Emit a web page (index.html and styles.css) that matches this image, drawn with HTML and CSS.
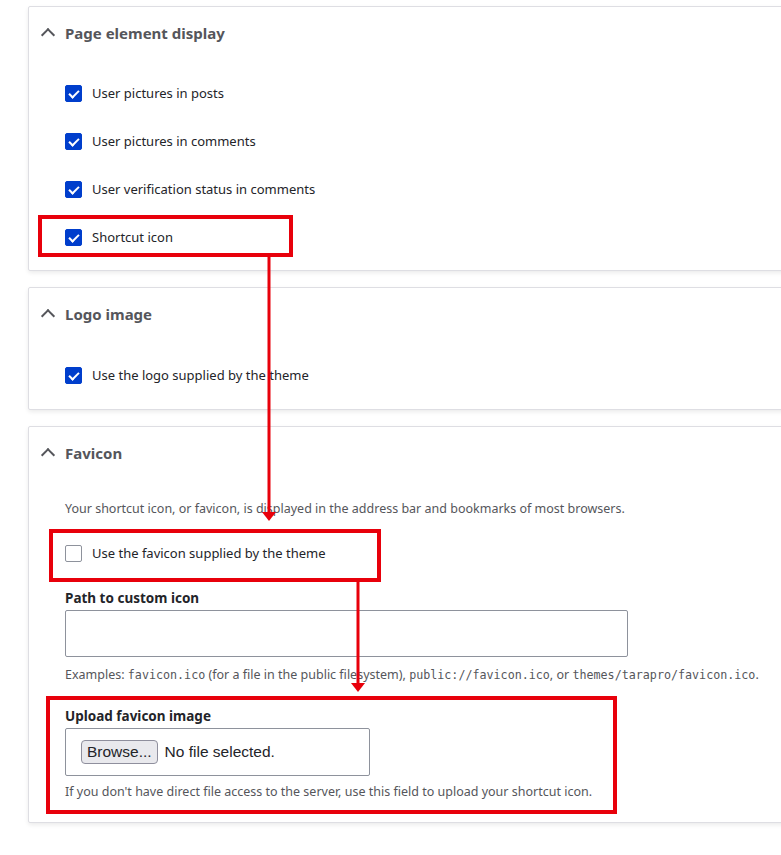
FILE: index.html
```html
<!DOCTYPE html>
<html lang="en">
<head>
  <meta charset="UTF-8" />
  <title>Appearance settings</title>
  <link rel="stylesheet" href="styles.css">
</head>
<body>
  <div class="page">

    <details class="card" open>
      <summary class="card-title"><span class="chevron"></span>Page element display</summary>
      <div class="card-body">
        <label class="check-row"><span class="box checked"></span>User pictures in posts</label>
        <label class="check-row"><span class="box checked"></span>User pictures in comments</label>
        <label class="check-row"><span class="box checked"></span>User verification status in comments</label>
        <label class="check-row"><span class="box checked"></span>Shortcut icon</label>
      </div>
    </details>

    <details class="card" open>
      <summary class="card-title"><span class="chevron"></span>Logo image</summary>
      <div class="card-body logo-body">
        <label class="check-row"><span class="box checked"></span>Use the logo supplied by the theme</label>
      </div>
    </details>

    <details class="card" open>
      <summary class="card-title"><span class="chevron"></span>Favicon</summary>
      <div class="card-body favicon-body">
        <p class="description">Your shortcut icon, or favicon, is displayed in the address bar and bookmarks of most browsers.</p>
        <label class="check-row"><span class="box"></span>Use the favicon supplied by the theme</label>

        <label class="field-label" for="favicon_path">Path to custom icon</label>
        <input type="text" id="favicon_path" class="text-input" />
        <p class="description examples">Examples: <code>favicon.ico</code> (for a file in the public filesystem), <code>public://favicon.ico</code>, or <code>themes/tarapro/favicon.ico</code>.</p>

        <label class="field-label upload-label">Upload favicon image</label>
        <div class="file-input">
          <span class="browse-btn">Browse...</span>
          <span class="file-status">No file selected.</span>
        </div>
        <p class="description help">If you don't have direct file access to the server, use this field to upload your shortcut icon.</p>
      </div>
    </details>

  </div>

  <!-- annotations drawn on top of the screenshot -->
  <div class="mark mark-shortcut"></div>
  <div class="mark mark-theme"></div>
  <div class="mark mark-upload"></div>
  <svg class="arrows" width="781" height="855" viewBox="0 0 781 855">
    <line x1="269" y1="256" x2="269" y2="513" stroke="#e8000b" stroke-width="3" />
    <polygon points="262,512 276,512 269,521" fill="#e8000b" />
    <line x1="358" y1="580" x2="358" y2="684" stroke="#e8000b" stroke-width="3" />
    <polygon points="351,683 365,683 358,692" fill="#e8000b" />
  </svg>
</body>
</html>
```

FILE: styles.css
```css
body {
  margin: 0;
  background: #fff;
  color: #232429;
  font-family: "Noto Sans", "Open Sans", Arial, sans-serif;
  overflow: hidden;
}
.page {
  padding: 6px 0 30px 28px;
  width: 820px;
}
.card {
  border: 1px solid #dedee3;
  border-radius: 2px;
  box-shadow: 0 2px 4px rgba(0, 0, 0, 0.08);
  background: #fff;
  margin-bottom: 16px;
}
.card-title {
  list-style: none;
  display: flex;
  align-items: center;
  height: 51px;
  padding-left: 11px;
  font-size: 15px;
  font-weight: bold;
  color: #55565b;
  cursor: pointer;
}
.card-title::-webkit-details-marker {
  display: none;
}
.chevron {
  width: 8px;
  height: 8px;
  border-left: 2px solid #55565b;
  border-top: 2px solid #55565b;
  transform: rotate(45deg);
  margin: 5px 12px 0 3px;
}
.card-body {
  padding: 11px 0 9px 36px;
}
.logo-body {
  padding: 12px 0 10px 36px;
}
.check-row {
  display: flex;
  align-items: center;
  height: 48px;
  font-size: 13px;
}
.box {
  width: 15px;
  height: 15px;
  border: 1px solid #8e929c;
  border-radius: 2px;
  margin-right: 10px;
  position: relative;
}
.box.checked {
  background: #003ecc;
  border-color: #003ecc;
}
.box.checked::after {
  content: "";
  position: absolute;
  left: 5px;
  top: 2px;
  width: 4px;
  height: 8px;
  border-right: 2px solid #fff;
  border-bottom: 2px solid #fff;
  transform: rotate(45deg);
}
.favicon-body {
  padding-top: 23px;
  padding-bottom: 22px;
}
.description {
  margin: 0;
  font-size: 12.5px;
  line-height: 16px;
  color: #55565b;
}
.favicon-body .check-row {
  margin-top: 12px;
}
.field-label {
  display: block;
  margin-top: 12px;
  font-size: 13.5px;
  line-height: 18px;
  font-weight: bold;
}
.text-input {
  display: block;
  margin-top: 3px;
  width: 563px;
  height: 47px;
  box-sizing: border-box;
  border: 1px solid #8e929c;
  border-radius: 2px;
}
.examples {
  margin-top: 10px;
}
code {
  font-family: "DejaVu Sans Mono", monospace;
  font-size: 11.7px;
}
.upload-label {
  margin-top: 24px;
}
.file-input {
  display: flex;
  align-items: center;
  margin-top: 3px;
  width: 305px;
  height: 48px;
  box-sizing: border-box;
  border: 1px solid #8e929c;
  border-radius: 2px;
  padding-left: 15px;
  font-family: "Liberation Sans", Arial, sans-serif;
  font-size: 15.5px;
}
.browse-btn {
  display: inline-block;
  height: 22px;
  line-height: 22px;
  padding: 0 5px;
  border: 1px solid #8f8f9d;
  border-radius: 4px;
  background: #e9e9ed;
  margin-right: 7px;
}
.help {
  margin-top: 8px;
}

.mark {
  position: absolute;
  border: 4px solid #e8000b;
  box-sizing: border-box;
}
.mark-shortcut {
  left: 38px;
  top: 215px;
  width: 255px;
  height: 42px;
}
.mark-theme {
  left: 49px;
  top: 529px;
  width: 332px;
  height: 53px;
}
.mark-upload {
  left: 46px;
  top: 696px;
  width: 571px;
  height: 118px;
}
.arrows {
  position: absolute;
  left: 0;
  top: 0;
  pointer-events: none;
}
```
